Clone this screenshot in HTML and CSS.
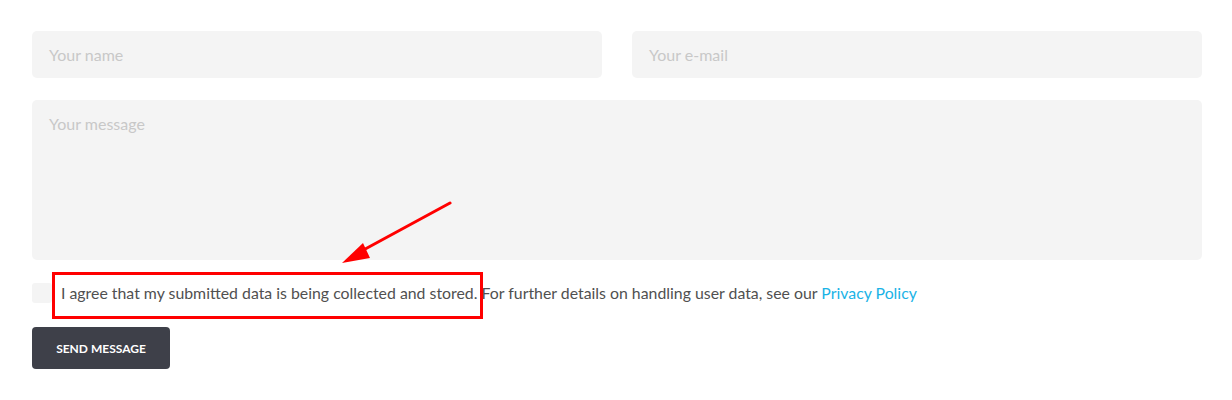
FILE: index.html
```html
<!DOCTYPE html>
<html>
<head>
<meta charset="utf-8">
<link rel="stylesheet" href="styles.css">
</head>
<body>
<form class="form">
  <div class="row">
    <div class="field">Your name</div>
    <div class="field">Your e-mail</div>
  </div>
  <div class="area">Your message</div>
  <div class="agree">
    <span class="check"></span>
    <span class="agree-text">I agree that my submitted data is being collected and stored. For further details on handling user data, see our <a class="link">Privacy Policy</a></span>
  </div>
  <button class="btn" type="button">SEND MESSAGE</button>
  <div class="highlight"></div>
  <svg class="arrow" width="140" height="80" viewBox="0 0 140 80">
    <line x1="128" y1="13" x2="34" y2="64" stroke="#ff0000" stroke-width="3" stroke-linecap="round"/>
    <polygon points="20,73 41,53 48,68" fill="#ff0000"/>
  </svg>
</form>
</body>
</html>
```
FILE: styles.css
```css
html, body {
  margin: 0;
  padding: 0;
  background: #fff;
}
.form {
  position: relative;
  padding: 31px 30px 0 32px;
  font-family: Lato, "Open Sans", sans-serif;
  font-size: 16px;
  color: #555;
}
.row {
  display: flex;
  gap: 30px;
}
.field {
  flex: 1;
  height: 47px;
  box-sizing: border-box;
  background: #f4f4f4;
  border-radius: 5px;
  padding: 0 17px;
  display: flex;
  align-items: center;
  color: #c8c8c8;
}
.area {
  margin-top: 22px;
  height: 160px;
  box-sizing: border-box;
  background: #f4f4f4;
  border-radius: 5px;
  padding: 14px 17px;
  color: #c8c8c8;
}
.agree {
  margin-top: 23px;
  display: flex;
  align-items: center;
  gap: 9px;
  height: 20px;
}
.check {
  width: 20px;
  height: 20px;
  background: #f4f4f4;
  border-radius: 3px;
  flex: none;
}
.agree-text {
  font-size: 15.85px;
  line-height: 20px;
  color: #505050;
}
.link {
  color: #1ab3e6;
}
.btn {
  margin-top: 24px;
  width: 138px;
  height: 42px;
  border: 0;
  border-radius: 4px;
  background: #3e4049;
  color: #fff;
  font-family: Lato, sans-serif;
  font-weight: 700;
  font-size: 12px;
  letter-spacing: 0;
  padding: 0;
}
.highlight {
  position: absolute;
  left: 52px;
  top: 272px;
  width: 425px;
  height: 41px;
  border: 3px solid #ff0000;
}
.arrow {
  position: absolute;
  left: 322px;
  top: 190px;
}
```
